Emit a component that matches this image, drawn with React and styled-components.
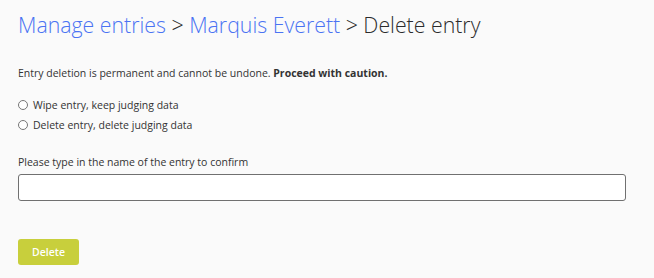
import React from "react";
import styled, { createGlobalStyle } from "styled-components";

const Global = createGlobalStyle`
  html, body { margin: 0; padding: 0; background: #fafafa; }
  body { font-family: "Open Sans", "Noto Sans", sans-serif; color: #333; }
`;

const Page = styled.div`
  padding: 10px 28px 0 18px;
  display: flex;
  flex-direction: column;
`;

const Heading = styled.h1`
  margin: 0;
  font-size: 21.3px;
  font-weight: 300;
  line-height: 30px;
  color: #2b2b2b;
`;

const Crumb = styled.a`
  color: #4a73f3;
  text-decoration: none;
`;

const Notice = styled.p`
  margin: 25px 0 0;
  font-size: 10.5px;
  line-height: 16px;
  color: #333;
  strong { font-weight: 700; }
`;

const Options = styled.div`
  margin-top: 16px;
  display: flex;
  flex-direction: column;
  gap: 4px;
`;

const Option = styled.label`
  display: flex;
  align-items: center;
  gap: 5px;
  font-size: 10.5px;
  line-height: 16px;
  color: #333;
`;

const Radio = styled.input.attrs({ type: "radio" })`
  margin: 0;
  width: 10px;
  height: 10px;
`;

const FieldLabel = styled.label`
  margin-top: 21px;
  font-size: 10.5px;
  line-height: 16px;
  color: #333;
`;

const TextInput = styled.input`
  margin-top: 4px;
  box-sizing: border-box;
  height: 27px;
  width: 608px;
  border: 1px solid #707070;
  border-radius: 3px;
  background: #fff;
`;

const Button = styled.button`
  margin-top: 38px;
  align-self: flex-start;
  width: 61px;
  height: 26px;
  border: none;
  border-radius: 3px;
  background: #c8cf3c;
  color: #fff;
  font-family: "Open Sans", sans-serif;
  font-size: 10.5px;
  font-weight: 600;
  padding: 0;
`;

export default function App() {
  return (
    <>
      <Global />
      <Page>
        <Heading>
          <Crumb href="#">Manage entries</Crumb> &gt; <Crumb href="#">Marquis Everett</Crumb> &gt; Delete entry
        </Heading>
        <Notice>
          Entry deletion is permanent and cannot be undone. <strong>Proceed with caution.</strong>
        </Notice>
        <Options>
          <Option><Radio name="mode" /> Wipe entry, keep judging data</Option>
          <Option><Radio name="mode" /> Delete entry, delete judging data</Option>
        </Options>
        <FieldLabel>Please type in the name of the entry to confirm</FieldLabel>
        <TextInput />
        <Button>Delete</Button>
      </Page>
    </>
  );
}
